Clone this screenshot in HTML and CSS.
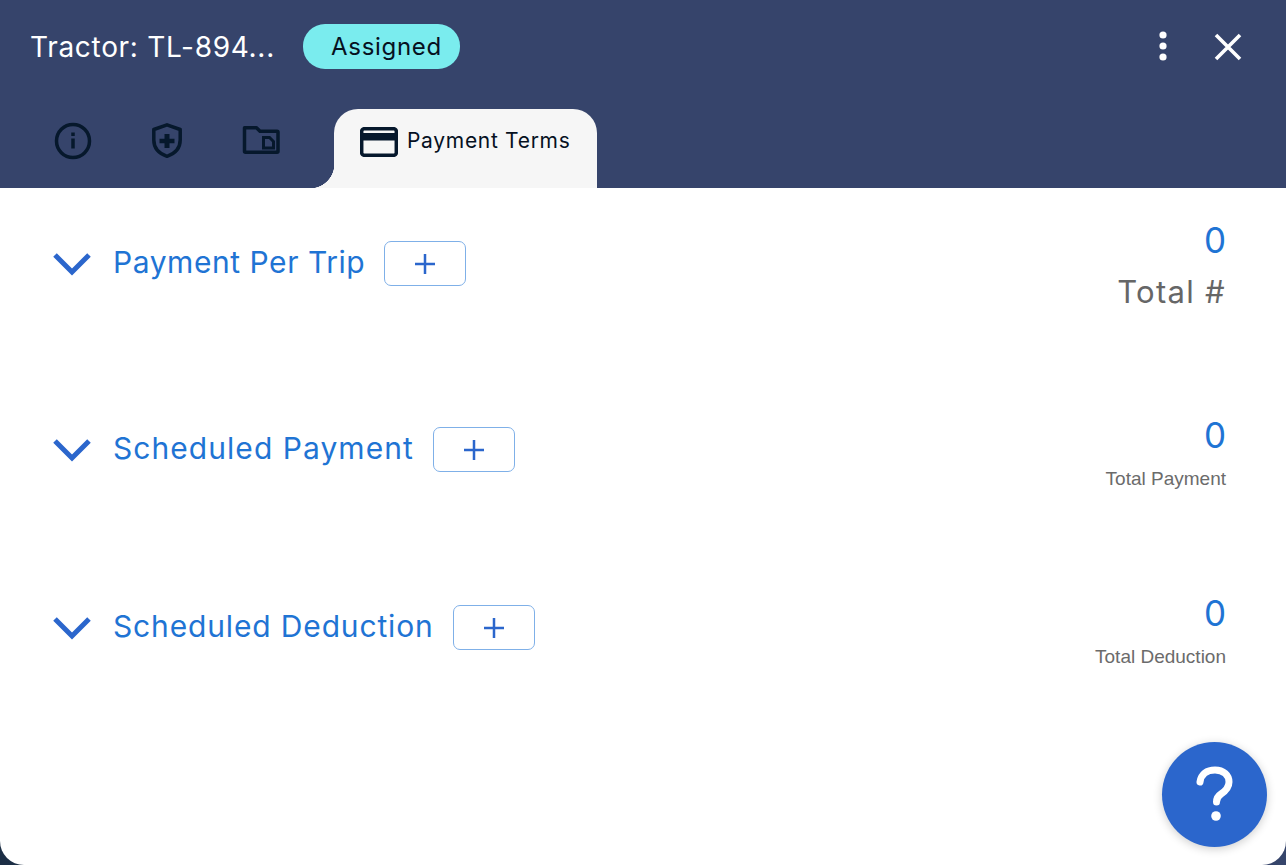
FILE: index.html
```html
<!DOCTYPE html>
<html lang="en">
<head>
    <meta charset="UTF-8">
    <title>Tractor Payment Terms</title>
    <link rel="stylesheet" href="styles.css">
</head>
<body>
    <div class="panel">
        <header class="panel-header">
            <div class="top-row">
                <h1 class="title">Tractor: TL-894...</h1>
                <span class="badge">Assigned</span>
                <div class="top-actions">
                    <svg class="icon-more" viewBox="0 0 8 36"><circle cx="4" cy="6" r="3.6"/><circle cx="4" cy="17" r="3.6"/><circle cx="4" cy="28" r="3.6"/></svg>
                    <svg class="icon-close" viewBox="0 0 28 28"><path d="M2 2 26 26M26 2 2 26"/></svg>
                </div>
            </div>
            <nav class="tabs">
                <span class="tab-icon">
                    <svg viewBox="0 0 38 38"><circle cx="19" cy="19" r="16.5" class="line"/><path d="M19 16.5v10M19 10.5v3.5" class="line"/></svg>
                </span>
                <span class="tab-icon">
                    <svg viewBox="0 0 38 38"><path d="M19 2.800 32.200 7.500V18c0 7.800-5 13.500-13.200 16.300C10.800 31.500 5.800 25.800 5.800 18V7.500Z" class="line"/><path d="M16.500 12h5v4.700h5v4.600h-5V26h-5v-4.700h-5v-4.600h5Z" class="solid"/></svg>
                </span>
                <span class="tab-icon">
                    <svg viewBox="0 0 38 38"><path d="M2.500 5.700h12l3.500 3.500h17a1 1 0 0 1 1 1V29.300a1 1 0 0 1-1 1h-31.500a1 1 0 0 1-1-1Z" class="line"/><path d="M21.500 15.500h6l4 4v6.500h-10Z" class="file"/></svg>
                </span>
                <div class="tab-active">
                    <svg viewBox="0 0 38 30"><rect x="1.700" y="1.700" width="34.600" height="26.600" rx="2.500" class="line"/><path d="M1.500 6h35v7.500h-35Z" class="solid"/></svg>
                    <span>Payment Terms</span>
                </div>
            </nav>
        </header>

        <section class="term term-first">
            <div class="term-left">
                <svg class="chevron" viewBox="0 0 38 24"><path d="M2 3 19 20 36 3"/></svg>
                <h2>Payment Per Trip</h2>
                <button class="add-btn"><svg viewBox="0 0 20 20"><path d="M10 0v20M0 10h20"/></svg></button>
            </div>
            <div class="term-right">
                <div class="count">0</div>
                <div class="count-label-big">Total #</div>
            </div>
        </section>

        <section class="term term-second">
            <div class="term-left">
                <svg class="chevron" viewBox="0 0 38 24"><path d="M2 3 19 20 36 3"/></svg>
                <h2>Scheduled Payment</h2>
                <button class="add-btn"><svg viewBox="0 0 20 20"><path d="M10 0v20M0 10h20"/></svg></button>
            </div>
            <div class="term-right">
                <div class="count">0</div>
                <div class="count-label">Total Payment</div>
            </div>
        </section>

        <section class="term term-third">
            <div class="term-left">
                <svg class="chevron" viewBox="0 0 38 24"><path d="M2 3 19 20 36 3"/></svg>
                <h2>Scheduled Deduction</h2>
                <button class="add-btn"><svg viewBox="0 0 20 20"><path d="M10 0v20M0 10h20"/></svg></button>
            </div>
            <div class="term-right">
                <div class="count">0</div>
                <div class="count-label">Total Deduction</div>
            </div>
        </section>

        <button class="help-btn">
            <svg viewBox="0 0 40 60"><path d="M5 17C6 9 12 5 20 5c8.500 0 14 5 14 12 0 6-3.500 9-8 12-3 2-4.500 4-4.500 8" class="help-line"/><circle cx="21" cy="51" r="4.800" class="help-dot"/></svg>
        </button>
    </div>
</body>
</html>
```

FILE: styles.css
```css
* {
    box-sizing: border-box;
    margin: 0;
    padding: 0;
}

body {
    height: 865px;
    overflow: hidden;
    background: linear-gradient(to right, #1c2e45, #36456b);
    font-family: 'Inter', 'Liberation Sans', sans-serif;
}

.panel {
    position: relative;
    height: 865px;
    background-color: white;
    border-radius: 0 0 24px 24px;
    overflow: hidden;
}

.panel-header {
    height: 188px;
    background-color: #36446b;
}

.top-row {
    display: flex;
    align-items: center;
    height: 109px;
    padding: 0 44px 16px 30px;
}

.title {
    width: 273px;
    font-size: 28px;
    font-weight: 400;
    letter-spacing: 0.7px;
    color: white;
    white-space: nowrap;
}

.badge {
    width: 157px;
    height: 45px;
    line-height: 45px;
    padding-left: 28px;
    background-color: #7aecee;
    border-radius: 22px;
    font-size: 24px;
    letter-spacing: 0.7px;
    color: #06111f;
}

.top-actions {
    display: flex;
    align-items: center;
    gap: 47px;
    margin-left: auto;
}

.icon-more {
    width: 8px;
    height: 36px;
    fill: white;
}

.icon-close {
    width: 28px;
    height: 28px;
    fill: none;
    stroke: white;
    stroke-width: 3.600;
}

.tabs {
    display: flex;
    align-items: flex-start;
    height: 79px;
    padding-left: 54px;
}

.tab-icon {
    width: 38px;
    height: 38px;
    margin: 13px 56px 0 0;
}

.tab-icon svg {
    display: block;
    width: 38px;
    height: 38px;
}

.line {
    fill: none;
    stroke: #06182c;
    stroke-width: 3.500;
    stroke-linejoin: round;
}

.solid {
    fill: #06182c;
}

.file {
    fill: none;
    stroke: #06182c;
    stroke-width: 3;
}

.tab-active {
    position: relative;
    display: flex;
    align-items: center;
    gap: 9px;
    width: 263px;
    height: 79px;
    margin-left: -2px;
    padding: 0 0 17px 26px;
    background-color: #f6f6f6;
    border-radius: 24px 24px 0 0;
    font-size: 21px;
    letter-spacing: 0.7px;
    color: #06111f;
}

.tab-active::before {
    content: "";
    position: absolute;
    left: -24px;
    bottom: 0;
    width: 24px;
    height: 24px;
    background: radial-gradient(circle at 0 0, #36446b 24px, #f6f6f6 24.500px);
}

.tab-active svg {
    width: 38px;
    height: 30px;
    margin-top: 3px;
}

.term {
    display: flex;
    justify-content: space-between;
    align-items: flex-start;
    padding: 32px 60px 0 53px;
}

.term-first {
    height: 186px;
}

.term-second {
    height: 178px;
}

.term-left {
    display: flex;
    align-items: center;
    margin-top: 21px;
}

.chevron {
    width: 38px;
    height: 24px;
    margin-right: 22px;
    fill: none;
    stroke: #2b66cc;
    stroke-width: 5;
}

.term h2 {
    font-size: 30px;
    font-weight: 400;
    color: #1f74d4;
    white-space: nowrap;
    margin-top: -3px;
}

.term-first h2 {
    letter-spacing: 0.55px;
}

.term-second h2 {
    letter-spacing: 1.05px;
}

.term-third h2 {
    letter-spacing: 0.85px;
}

.add-btn {
    display: flex;
    align-items: center;
    justify-content: center;
    width: 82px;
    height: 45px;
    margin-left: 19px;
    background: white;
    border: 1px solid #7fb0e8;
    border-radius: 7px;
}

.add-btn svg {
    width: 20px;
    height: 20px;
    fill: none;
    stroke: #2b66cc;
    stroke-width: 2.500;
}

.term-right {
    margin-top: 8px;
    text-align: right;
}

.term-first .term-right {
    margin-top: -1px;
}

.count {
    font-size: 35px;
    line-height: 42px;
    color: #1f74d4;
}

.count-label-big {
    margin-top: 11px;
    font-size: 31px;
    line-height: 40px;
    letter-spacing: 1.3px;
    color: #666;
}

.count-label {
    margin-top: 12px;
    font-family: 'Liberation Sans', sans-serif;
    font-size: 19px;
    line-height: 22px;
    color: #6b6b6b;
}

.help-btn {
    position: absolute;
    left: 1162px;
    top: 742px;
    display: flex;
    align-items: center;
    justify-content: center;
    width: 105px;
    height: 105px;
    background-color: #2b66cc;
    border: none;
    border-radius: 50%;
    box-shadow: 0 2px 10px rgba(0, 0, 0, 0.2);
}

.help-btn svg {
    width: 40px;
    height: 60px;
}

.help-line {
    fill: none;
    stroke: white;
    stroke-width: 7;
    stroke-linecap: round;
}

.help-dot {
    fill: white;
}
```
